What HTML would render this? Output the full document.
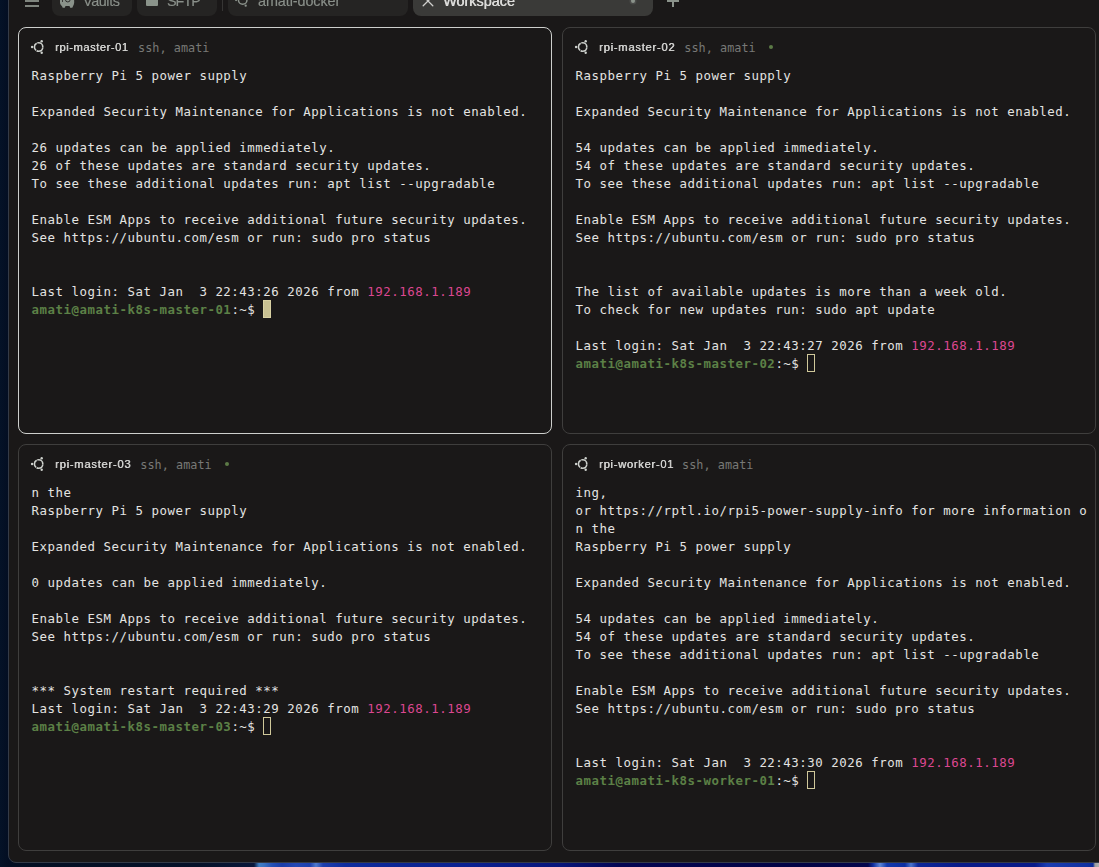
<!DOCTYPE html>
<html lang="en"><head><meta charset="utf-8"><title>Workspace</title>
<style>
*{box-sizing:border-box;margin:0;padding:0}
html,body{width:1099px;height:867px;overflow:hidden}
body{position:relative;background:#041126;font-family:"Liberation Sans",sans-serif}
.wall{position:absolute;left:0;top:0;width:1099px;height:867px;background:
 linear-gradient(90deg,#041227 0px,#030e22 8px,#051129 200px,#08173a 254px,#3f7fc4 259px,#3a72c0 264px,#2450b4 272px,#1a3ca8 282px,#2448b4 296px,#1d40ae 310px,#4f7acc 316px,#1c3eac 323px,#0e2c9e 345px,#0b2594 400px,#0a2090 470px,#07157a 560px,#030552 620px,#020344 800px,#03064c 868px,#0d2c9c 873px,#5d86d6 880px,#1238ac 887px,#0c2ea0 905px,#4a74cc 911px,#0c2698 918px,#081a88 960px,#081a88 1035px,#1a3cb0 1047px,#1030a0 1088px,#0c2a98 1093px,#9d9d9d 1095px,#b0b0b0 1099px);}
.win{position:absolute;left:8px;top:-20px;width:1100px;height:883px;background:#1a1818;border:1px solid #343b47;border-radius:8px}
.tab{position:absolute;top:-14px;height:30px;border-radius:8px;background:#252423;color:#8a908a;font-size:14.4px;-webkit-text-stroke:0.15px #8a908a;line-height:17px;white-space:nowrap}
.tab span{position:absolute;top:7px;will-change:transform}
.tab.act{background:#3a3a38;color:#dcdcda;-webkit-text-stroke:0;text-shadow:0.5px 0 0 #dcdcda}
.pane{position:absolute;border:1px solid #3f3e3d;border-radius:8px;background:#1a1818}
.pane.act{border-color:#cdcfcc}
.hd{position:absolute;left:13px;top:11px;height:16px;white-space:nowrap;color:#cdd0cc}
.hd .ubu{position:absolute;left:-2px;top:0}
.hd b{position:absolute;left:23px;top:0;font:normal 11.2px/16px "Liberation Sans",sans-serif;letter-spacing:0.1px;color:#d2d2d0;text-shadow:0.45px 0 0 #d2d2d0;will-change:transform}
.hd i{position:absolute;top:1px;font:normal 11.8px/16px "DejaVu Sans Mono","Liberation Mono",monospace;color:#787876;font-style:normal;letter-spacing:0.05px}
.hd u{position:absolute;top:6px;width:4px;height:4px;border-radius:50%;background:#5b7a46}
pre{position:absolute;left:12.5px;top:39px;font:12.4px/18px "DejaVu Sans Mono","Liberation Mono",monospace;letter-spacing:0.535px;color:#e4e4e2;white-space:pre}
pre .ip{color:#dc4790}
pre .g{color:#5c8046;font-weight:bold}
pre .cur{display:inline-block;width:8px;height:18px;vertical-align:top;margin:-1px 0 0 0;background:#c8c092;border:1px solid #d8d0a2}
pre .curo{display:inline-block;width:8px;height:18px;vertical-align:top;margin:-1px 0 0 0;border:1px solid #d0c89a}
</style></head><body>
<div class="wall"></div>
<div class="win"></div>

<div style="position:absolute;left:25px;top:0;width:14px;height:2px;background:#7f857e"></div>
<div style="position:absolute;left:25px;top:5px;width:14px;height:2px;background:#7f857e"></div>
<div class="tab" style="left:52px;width:80px"><svg style="position:absolute;left:2px;top:8px" width="24" height="16" viewBox="54 -6 24 16"><path fill="#8a928a" d="M60 -4Q60 -6 62 -6L72 -6Q74 -6 74 -4L74.200 2.500Q74 4.600 73 6.200L72.300 7.800L70.200 7.800L69.500 5.900L65.500 5.900L64.800 7.800L62.700 7.800L62 6.200Q60.300 5 60 3Z"/><circle cx="67.800" cy="-0.400" r="2.350" fill="none" stroke="#262524" stroke-width="0.900"/><rect x="62" y="-6" width="0.800" height="8" fill="#262524"/></svg><span style="left:31px;letter-spacing:-0.4px">Vaults</span></div>
<div class="tab" style="left:137px;width:80px"><div style="position:absolute;left:9px;top:8px;width:12px;height:12px;background:#8a938a;border-radius:1px"></div><span style="left:30px;letter-spacing:-1px">SFTP</span></div>
<div style="position:absolute;left:222px;top:0;width:1px;height:11px;background:#363534"></div>
<div class="tab" style="left:228px;width:180px"><svg style="position:absolute;left:6px;top:6px;color:#8a918a" viewBox="0 0 16 16" width="16" height="16"><circle cx="8.700" cy="8" r="4.250" fill="none" stroke="currentColor" stroke-width="1.500"/><circle cx="2.100" cy="8" r="1.150" fill="currentColor"/><circle cx="11.700" cy="2.300" r="1.150" fill="currentColor"/><circle cx="11.700" cy="13.700" r="1.150" fill="currentColor"/></svg><span style="left:30px;letter-spacing:-0.08px">amati-docker</span></div>
<div class="tab act" style="left:413px;width:240px"><svg style="position:absolute;left:9px;top:8.5px" width="12" height="12" viewBox="0 0 12 12"><path d="M1.200 1.200L10.800 10.800M10.800 1.200L1.200 10.800" stroke="#cfcfcd" stroke-width="1.300" fill="none" stroke-linecap="round"/></svg><span style="left:30px">Workspace</span><div style="position:absolute;left:218px;top:13px;width:4px;height:4px;border-radius:50%;background:#8b938b;box-shadow:0 0 0 1.5px #4a4b49"></div></div>
<div style="position:absolute;left:667px;top:0;width:12px;height:2px;background:#8a928a"></div>
<div style="position:absolute;left:672px;top:0;width:2px;height:7px;background:#8a928a"></div>

<div class="pane act" style="left:18px;top:27px;width:534px;height:407px">
<div class="hd"><svg class="ubu" viewBox="0 0 16 16" width="16" height="16"><circle cx="8.6" cy="8" r="4.2" fill="none" stroke="currentColor" stroke-width="1.6" stroke-dasharray="8.2 0.6" stroke-dashoffset="8.5"/><circle cx="2.1" cy="8" r="1.2" fill="currentColor"/><circle cx="11.7" cy="2.3" r="1.2" fill="currentColor"/><circle cx="11.7" cy="13.7" r="1.2" fill="currentColor"/></svg><b style="letter-spacing:0.53px">rpi-master-01</b><i style="left:106px">ssh, amati</i></div>
<pre>Raspberry Pi 5 power supply

Expanded Security Maintenance for Applications is not enabled.

26 updates can be applied immediately.
26 of these updates are standard security updates.
To see these additional updates run: apt list --upgradable

Enable ESM Apps to receive additional future security updates.
See https://ubuntu.com/esm or run: sudo pro status


Last login: Sat Jan  3 22:43:26 2026 from <span class="ip">192.168.1.189</span>
<span class="g">amati@amati-k8s-master-01</span>:~$ <span class="cur"></span></pre>
</div>
<div class="pane" style="left:562px;top:27px;width:534px;height:407px">
<div class="hd"><svg class="ubu" viewBox="0 0 16 16" width="16" height="16"><circle cx="8.6" cy="8" r="4.2" fill="none" stroke="currentColor" stroke-width="1.6" stroke-dasharray="8.2 0.6" stroke-dashoffset="8.5"/><circle cx="2.1" cy="8" r="1.2" fill="currentColor"/><circle cx="11.7" cy="2.3" r="1.2" fill="currentColor"/><circle cx="11.7" cy="13.7" r="1.2" fill="currentColor"/></svg><b style="letter-spacing:0.74px">rpi-master-02</b><i style="left:108.25px">ssh, amati</i><u style="left:193px"></u></div>
<pre>Raspberry Pi 5 power supply

Expanded Security Maintenance for Applications is not enabled.

54 updates can be applied immediately.
54 of these updates are standard security updates.
To see these additional updates run: apt list --upgradable

Enable ESM Apps to receive additional future security updates.
See https://ubuntu.com/esm or run: sudo pro status


The list of available updates is more than a week old.
To check for new updates run: sudo apt update

Last login: Sat Jan  3 22:43:27 2026 from <span class="ip">192.168.1.189</span>
<span class="g">amati@amati-k8s-master-02</span>:~$ <span class="curo"></span></pre>
</div>
<div class="pane" style="left:18px;top:444px;width:534px;height:407px">
<div class="hd"><svg class="ubu" viewBox="0 0 16 16" width="16" height="16"><circle cx="8.6" cy="8" r="4.2" fill="none" stroke="currentColor" stroke-width="1.6" stroke-dasharray="8.2 0.6" stroke-dashoffset="8.5"/><circle cx="2.1" cy="8" r="1.2" fill="currentColor"/><circle cx="11.7" cy="2.3" r="1.2" fill="currentColor"/><circle cx="11.7" cy="13.7" r="1.2" fill="currentColor"/></svg><b style="letter-spacing:0.74px">rpi-master-03</b><i style="left:108.25px">ssh, amati</i><u style="left:193px"></u></div>
<pre>n the
Raspberry Pi 5 power supply

Expanded Security Maintenance for Applications is not enabled.

0 updates can be applied immediately.

Enable ESM Apps to receive additional future security updates.
See https://ubuntu.com/esm or run: sudo pro status


*** System restart required ***
Last login: Sat Jan  3 22:43:29 2026 from <span class="ip">192.168.1.189</span>
<span class="g">amati@amati-k8s-master-03</span>:~$ <span class="curo"></span></pre>
</div>
<div class="pane" style="left:562px;top:444px;width:534px;height:407px">
<div class="hd"><svg class="ubu" viewBox="0 0 16 16" width="16" height="16"><circle cx="8.6" cy="8" r="4.2" fill="none" stroke="currentColor" stroke-width="1.6" stroke-dasharray="8.2 0.6" stroke-dashoffset="8.5"/><circle cx="2.1" cy="8" r="1.2" fill="currentColor"/><circle cx="11.7" cy="2.3" r="1.2" fill="currentColor"/><circle cx="11.7" cy="13.7" r="1.2" fill="currentColor"/></svg><b style="letter-spacing:0.7px">rpi-worker-01</b><i style="left:106px">ssh, amati</i></div>
<pre>ing,
or https://rptl.io/rpi5-power-supply-info for more information o
n the
Raspberry Pi 5 power supply

Expanded Security Maintenance for Applications is not enabled.

54 updates can be applied immediately.
54 of these updates are standard security updates.
To see these additional updates run: apt list --upgradable

Enable ESM Apps to receive additional future security updates.
See https://ubuntu.com/esm or run: sudo pro status


Last login: Sat Jan  3 22:43:30 2026 from <span class="ip">192.168.1.189</span>
<span class="g">amati@amati-k8s-worker-01</span>:~$ <span class="curo"></span></pre>
</div>
</body></html>
